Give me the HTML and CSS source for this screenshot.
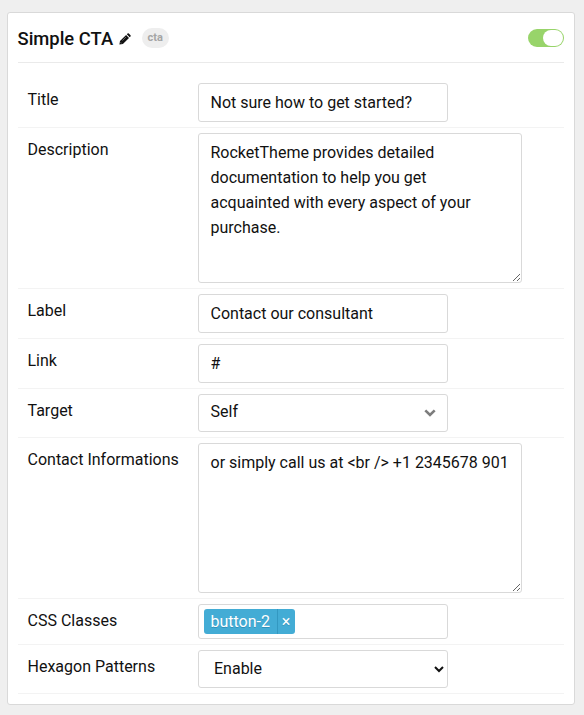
FILE: index.html
```html
<!DOCTYPE html>
<html lang="en">
<head>
<meta charset="utf-8">
<title>Simple CTA</title>
<link rel="stylesheet" href="styles.css">
</head>
<body>
<section class="card">
  <header class="card-header">
    <h4 class="title">Simple CTA</h4>
    <svg class="pencil" viewBox="0 0 12 12"><path d="M.4 11.6 1 8.1 7.1 2l2.9 2.9-6.1 6.1ZM7.8 1.3l.8-.8q.6-.5 1.2 0l1.7 1.7q.5.6 0 1.2l-.8.8Z" fill="#111"/><path d="M1.5 9.2 2.8 10.5M3.4 7.6l3.6-3.6" stroke="#fff" stroke-width=".35"/></svg>
    <span class="badge">cta</span>
    <span class="toggle"><span class="knob"></span></span>
  </header>
  <div class="fields">
    <div class="row"><label class="label" for="title">Title</label><input id="title" class="control" type="text" value="Not sure how to get started?"></div>
    <div class="row"><label class="label" for="desc">Description</label><textarea id="desc" class="control area area-narrow" spellcheck="false">RocketTheme provides detailed documentation to help you get acquainted with every aspect of your purchase.</textarea></div>
    <div class="row"><label class="label" for="lab">Label</label><input id="lab" class="control" type="text" value="Contact our consultant"></div>
    <div class="row"><label class="label" for="link">Link</label><input id="link" class="control" type="text" value="#"></div>
    <div class="row"><span class="label">Target</span><div class="control picker"><span>Self</span><svg class="chevron" viewBox="0 0 12 8"><path d="M1.3 1.3 6 6l4.7-4.7" fill="none" stroke="#7d7d7d" stroke-width="2.6"/></svg></div></div>
    <div class="row"><label class="label" for="contact">Contact Informations</label><textarea id="contact" class="control area" spellcheck="false">or simply call us at &lt;br /&gt; +1 2345678 901</textarea></div>
    <div class="row"><span class="label">CSS Classes</span><div class="control tags"><span class="tag"><span class="tag-name">button-2</span><span class="tag-remove">×</span></span></div></div>
    <div class="row"><label class="label" for="hex">Hexagon Patterns</label><select id="hex" class="control select"><option>Enable</option></select></div>
  </div>
</section>
</body>
</html>
```
FILE: styles.css
```css
* { box-sizing: border-box; }
body {
  margin: 0;
  padding: 12px 9px 10px 7px;
  height: 715px;
  overflow: hidden;
  background: #efefef;
  color: #111;
  font: 16px/25px Roboto, sans-serif;
}
.card {
  height: 693px;
  padding: 0 10px;
  background: #fff;
  border: 1px solid #d9d9d9;
  border-radius: 3px;
}
.card-header {
  display: flex;
  align-items: center;
  height: 50px;
  border-bottom: 1px solid #eaeaea;
}
.title { margin: 0 0 0 -.5px; padding-top: 2px; font-size: 18.4px; font-weight: 500; }
.pencil { width: 12px; height: 12px; margin: 2px 0 0 5.5px; }
.badge {
  width: 27px;
  height: 20px;
  margin-left: 11px;
  border-radius: 10px;
  background: #eee;
  color: #a5a5a5;
  font-size: 11px;
  font-weight: 700;
  line-height: 19px;
  text-align: center;
}
.toggle {
  display: flex;
  justify-content: flex-end;
  width: 36px;
  height: 18px;
  margin-left: auto;
  padding: 1px;
  border-radius: 9px;
  background: #98d46a;
}
.knob { width: 20px; border-radius: 8px; background: #fff; }
.fields { padding-top: 15px; }
.row {
  display: flex;
  align-items: flex-start;
  padding: 5px 0;
  border-bottom: 1px solid #f3f3f3;
}
.label { width: 180px; padding: 4px 0 0 9.5px; line-height: 25px; }
.control {
  display: block;
  width: 250px;
  height: 39px;
  margin: 0;
  padding: 6px 11.5px;
  border: 1px solid #d9d9d9;
  border-radius: 3px;
  outline: 0;
  background: #fff;
  color: #111;
  font: inherit;
}
.area { width: 324px; height: 150px; padding-right: 8px; resize: both; overflow: hidden; }
.area-narrow { padding-right: 20px; }
.picker {
  display: flex;
  align-items: center;
  justify-content: space-between;
  height: 38px;
  padding: 0 11px 4px 11.5px;
}
.chevron { width: 12px; height: 8px; margin-top: 3px; }
.tags { height: 35px; padding: 4px 5px; }
.tag {
  display: inline-flex;
  height: 25px;
  border-radius: 3px;
  background: #43acd5;
  color: #fff;
  line-height: 25px;
  text-shadow: 0 1px 0 rgba(0, 80, 120, .3);
}
.tag-name { width: 73px; padding-left: 6.5px; }
.tag-remove { width: 18px; padding-right: 1px; border-left: 1px solid #3398c1; text-align: center; }
.select { height: 38px; padding: 5px 11.5px 7px 11px; }
```
